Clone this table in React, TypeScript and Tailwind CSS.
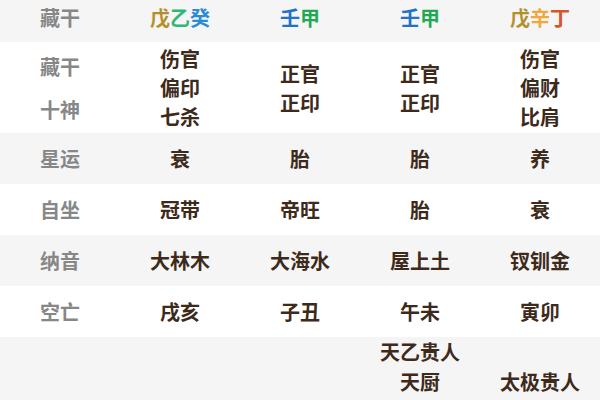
import React from "react";

const font = { fontFamily: '"Noto Sans CJK SC", "Noto Sans", sans-serif' };

type Seg = { t: string; c: string };

function Header({ segs }: { segs: Seg[] }) {
  return (
    <div className="flex-1 flex justify-center">
      {segs.map((s, i) => (
        <span key={i} className={`font-bold ${s.c}`}>
          {s.t}
        </span>
      ))}
    </div>
  );
}

function Vals({ items }: { items: string[] }) {
  return (
    <div className="flex-1 flex flex-col items-center justify-center leading-[29px] font-bold text-[#3d2a1b]">
      {items.map((t, i) => (
        <div key={i}>{t}</div>
      ))}
    </div>
  );
}

function Label({ children }: { children: React.ReactNode }) {
  return (
    <div className="flex-1 flex flex-col items-center justify-center text-[#878787] font-bold">
      {children}
    </div>
  );
}

function Row({
  label,
  vals,
  gray,
}: {
  label: string;
  vals: string[];
  gray?: boolean;
}) {
  return (
    <div className={`flex h-[51px] items-stretch ${gray ? "bg-[#f5f5f5]" : "bg-white"}`}>
      <Label>{label}</Label>
      {vals.map((v, i) => (
        <Vals key={i} items={[v]} />
      ))}
    </div>
  );
}

export default function App() {
  return (
    <div className="w-[600px] h-[400px] overflow-hidden bg-white text-[20px]" style={font}>
      <div className="flex h-[42px] items-center pb-[6px] bg-[#f5f5f5]">
        <div className="flex-1 flex justify-center text-[#878787] font-bold">藏干</div>
        <Header
          segs={[
            { t: "戊", c: "text-[#b3902c]" },
            { t: "乙", c: "text-[#2fb775]" },
            { t: "癸", c: "text-[#2a8bd8]" },
          ]}
        />
        <Header
          segs={[
            { t: "壬", c: "text-[#2272c6]" },
            { t: "甲", c: "text-[#22a852]" },
          ]}
        />
        <Header
          segs={[
            { t: "壬", c: "text-[#2272c6]" },
            { t: "甲", c: "text-[#22a852]" },
          ]}
        />
        <Header
          segs={[
            { t: "戊", c: "text-[#b3902c]" },
            { t: "辛", c: "text-[#f3a63c]" },
            { t: "丁", c: "text-[#d8552c]" },
          ]}
        />
      </div>
      <div className="flex h-[91px] items-stretch bg-white">
        <Label>
          <div className="leading-[29px]">藏干</div>
          <div className="leading-[29px] mt-[14px]">十神</div>
        </Label>
        <Vals items={["伤官", "偏印", "七杀"]} />
        <Vals items={["正官", "正印"]} />
        <Vals items={["正官", "正印"]} />
        <Vals items={["伤官", "偏财", "比肩"]} />
      </div>
      <Row label="星运" vals={["衰", "胎", "胎", "养"]} gray />
      <Row label="自坐" vals={["冠带", "帝旺", "胎", "衰"]} />
      <Row label="纳音" vals={["大林木", "大海水", "屋上土", "钗钏金"]} gray />
      <Row label="空亡" vals={["戌亥", "子丑", "午未", "寅卯"]} />
      <div className="flex h-[63px] items-stretch bg-[#f5f5f5]">
        <div className="flex-1" />
        <div className="flex-1" />
        <div className="flex-1" />
        <div className="flex-1 flex flex-col items-center justify-end pb-[3px] leading-[30px] font-bold text-[#3d2a1b]">
          <div>天乙贵人</div>
          <div>天厨</div>
        </div>
        <div className="flex-1 flex flex-col items-center justify-end pb-[3px] leading-[30px] font-bold text-[#3d2a1b]">
          <div>太极贵人</div>
        </div>
      </div>
    </div>
  );
}
